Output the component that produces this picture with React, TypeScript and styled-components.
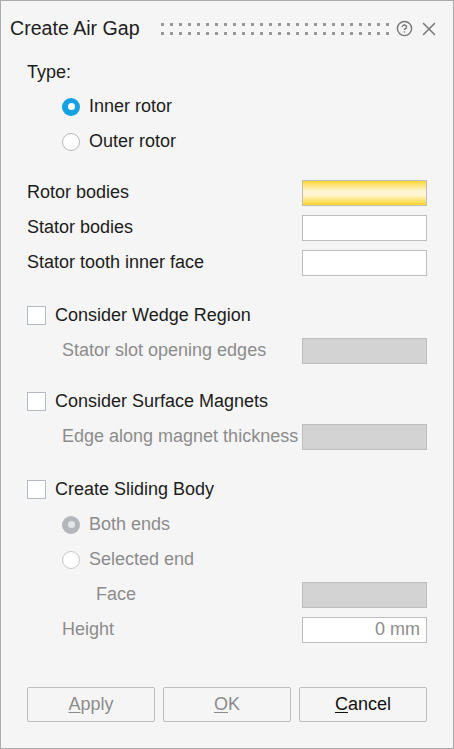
import React from "react";
import styled, { createGlobalStyle } from "styled-components";
import { CircleHelp, X } from "lucide-react";

const GlobalStyle = createGlobalStyle`
  html, body {
    margin: 0;
    padding: 0;
    background: #f5f5f5;
  }
  * {
    box-sizing: border-box;
  }
`;

const Dialog = styled.div`
  width: 454px;
  height: 749px;
  border: 1px solid #ababab;
  background: #f5f5f5;
  font-family: "Liberation Sans", Arial, sans-serif;
  font-size: 18px;
  color: #1c1c1c;
  display: flex;
  flex-direction: column;
`;

const Header = styled.div`
  height: 55px;
  display: flex;
  align-items: center;
  padding: 0 13px 0 9px;
`;

const Title = styled.div`
  font-size: 19.6px;
  color: #202020;
  white-space: nowrap;
`;

// drag handle made of two rows of small dots
const Grip = styled.div`
  width: 234px;
  height: 18px;
  margin-left: 18px;
  margin-top: 1px;
  background-image: radial-gradient(circle, #969696 1.4px, transparent 1.7px);
  background-size: 9px 9px;
`;

const HeaderIcons = styled.div`
  margin-left: auto;
  display: flex;
  align-items: center;
  gap: 5px;
  color: #777777;
`;

const Body = styled.div`
  padding: 0 26px;
  display: flex;
  flex-direction: column;
`;

const Section = styled.div<{ $top: number }>`
  margin-top: ${(p) => p.$top}px;
  display: flex;
  flex-direction: column;
`;

const Row = styled.div<{ $indent?: number; $h?: number }>`
  height: ${(p) => p.$h ?? 35}px;
  display: flex;
  align-items: center;
  padding-left: ${(p) => p.$indent ?? 0}px;
  white-space: nowrap;
`;

const Label = styled.span<{ $disabled?: boolean }>`
  color: ${(p) => (p.$disabled ? "#8c8c8c" : "#1c1c1c")};
`;

const RadioDot = styled.span<{ $checked?: boolean; $disabled?: boolean }>`
  width: 18px;
  height: 18px;
  border-radius: 50%;
  flex: none;
  margin-right: 9px;
  background: ${(p) =>
    p.$checked ? (p.$disabled ? "#b3b6ba" : "#13a1e2") : "#ffffff"};
  border: ${(p) =>
    p.$checked ? "none" : `1.5px solid ${p.$disabled ? "#c4c7cb" : "#b5b9be"}`};
  display: flex;
  align-items: center;
  justify-content: center;

  &::after {
    content: "";
    display: ${(p) => (p.$checked ? "block" : "none")};
    width: 7px;
    height: 7px;
    border-radius: 50%;
    background: ${(p) => (p.$disabled ? "#e4e5e7" : "#ffffff")};
  }
`;

const CheckBox = styled.span`
  width: 19px;
  height: 19px;
  flex: none;
  margin-right: 9px;
  background: #ffffff;
  border: 1.5px solid #b3bac2;
`;

const Field = styled.div<{ $variant: "active" | "empty" | "disabled" }>`
  margin-left: auto;
  width: 125px;
  height: 26px;
  flex: none;
  border: 1px solid #bdbdbd;
  background: ${(p) =>
    p.$variant === "active"
      ? "linear-gradient(to bottom, #ffd52e 0%, #ffe57a 18%, #fff5d2 42%, #fff5d2 58%, #ffe57a 80%, #ffd52e 100%)"
      : p.$variant === "disabled"
      ? "#d3d3d3"
      : "#ffffff"};
  display: flex;
  align-items: center;
  justify-content: flex-end;
  padding-right: 6px;
  color: #8c8c8c;
`;

const Footer = styled.div`
  margin-top: 40px;
  display: flex;
  gap: 8px;
`;

const Button = styled.button<{ $disabled?: boolean }>`
  width: 128px;
  height: 35px;
  border: 1px solid #bdbdbd;
  border-radius: 2px;
  background: #f5f5f5;
  font-family: "Liberation Sans", Arial, sans-serif;
  font-size: 18px;
  color: ${(p) => (p.$disabled ? "#8c8c8c" : "#111111")};
  padding: 0;

  u {
    text-underline-offset: 2px;
  }
`;

const Radio = ({
  label,
  checked,
  disabled,
  indent,
}: {
  label: string;
  checked?: boolean;
  disabled?: boolean;
  indent: number;
}) => (
  <Row $indent={indent}>
    <RadioDot $checked={checked} $disabled={disabled} />
    <Label $disabled={disabled}>{label}</Label>
  </Row>
);

const Check = ({ label }: { label: string }) => (
  <Row>
    <CheckBox />
    <Label>{label}</Label>
  </Row>
);

export default function App() {
  return (
    <>
      <GlobalStyle />
      <Dialog>
        <Header>
          <Title>Create Air Gap</Title>
          <Grip />
          <HeaderIcons>
            <CircleHelp size={17} strokeWidth={2} />
            <X size={22} strokeWidth={1.6} />
          </HeaderIcons>
        </Header>

        <Body>
          <Row $h={33}>
            <Label>Type:</Label>
          </Row>
          <Radio label="Inner rotor" checked indent={35} />
          <Radio label="Outer rotor" indent={35} />

          <Section $top={16}>
            <Row>
              <Label>Rotor bodies</Label>
              <Field $variant="active" />
            </Row>
            <Row>
              <Label>Stator bodies</Label>
              <Field $variant="empty" />
            </Row>
            <Row>
              <Label>Stator tooth inner face</Label>
              <Field $variant="empty" />
            </Row>
          </Section>

          <Section $top={18}>
            <Check label="Consider Wedge Region" />
            <Row $indent={35}>
              <Label $disabled>Stator slot opening edges</Label>
              <Field $variant="disabled" />
            </Row>
          </Section>

          <Section $top={16}>
            <Check label="Consider Surface Magnets" />
            <Row $indent={35}>
              <Label $disabled>Edge along magnet thickness</Label>
              <Field $variant="disabled" />
            </Row>
          </Section>

          <Section $top={18}>
            <Check label="Create Sliding Body" />
            <Radio label="Both ends" checked disabled indent={35} />
            <Radio label="Selected end" disabled indent={35} />
            <Row $indent={69}>
              <Label $disabled>Face</Label>
              <Field $variant="disabled" />
            </Row>
            <Row $indent={35}>
              <Label $disabled>Height</Label>
              <Field $variant="empty">0 mm</Field>
            </Row>
          </Section>

          <Footer>
            <Button $disabled>
              <u>A</u>pply
            </Button>
            <Button $disabled>
              <u>O</u>K
            </Button>
            <Button>
              <u>C</u>ancel
            </Button>
          </Footer>
        </Body>
      </Dialog>
    </>
  );
}
